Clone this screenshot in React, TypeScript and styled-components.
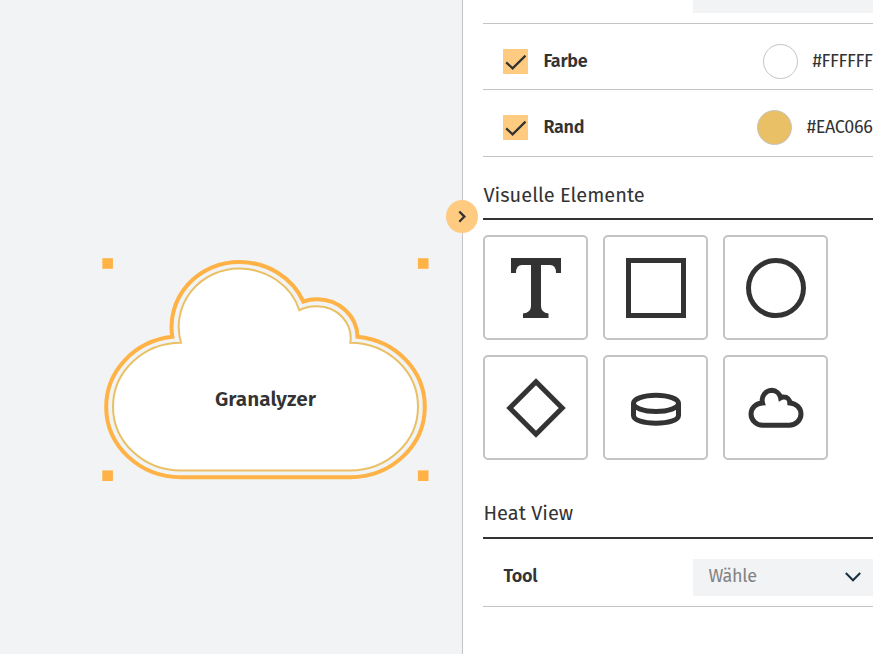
import React from "react";
import styled, { createGlobalStyle } from "styled-components";

const GlobalStyle = createGlobalStyle`
  * { box-sizing: border-box; }
  body { margin: 0; overflow: hidden; }
`;

const ink = "#333333";
const line = "#c4c4c4";

const Page = styled.div`
  display: flex;
  width: 873px;
  height: 654px;
  overflow: hidden;
  position: relative;
  background: #fff;
  color: ${ink};
  font-family: "Fira Sans", "Noto Sans", sans-serif;
`;

const Canvas = styled.main`
  flex: 0 0 462px;
  background: #f1f3f5;
  svg { display: block; }
`;

const Panel = styled.aside`
  flex: 1 0 411px;
  border-left: 1px solid ${line};
  padding-left: 20px;
  overflow: hidden;
`;

const Toggle = styled.button`
  position: absolute;
  left: 446px;
  top: 200px;
  width: 32px;
  height: 33px;
  padding: 0;
  border: 0;
  border-radius: 50%;
  background: #ffcb80;
  svg { display: block; }
`;

const Row = styled.div<{ $height: number }>`
  display: flex;
  align-items: flex-start;
  height: ${(p) => p.$height}px;
  padding-left: 20px;
  border-bottom: 1px solid ${line};
`;

const Label = styled.span<{ $top: number; $space?: number }>`
  font-size: 18px;
  line-height: 24px;
  font-weight: 600;
  letter-spacing: -0.25px;
  white-space: nowrap;
  margin-top: ${(p) => p.$top}px;
  margin-left: ${(p) => p.$space ?? 0.4}px;
`;

const Check = styled.span<{ $top: number }>`
  flex: 0 0 25px;
  height: 25px;
  margin-top: ${(p) => p.$top}px;
  background: #ffcb80;
  svg { display: block; }
`;

const ColorValue = styled.div<{ $left: number }>`
  display: flex;
  align-items: flex-start;
  margin-left: auto;
  width: ${(p) => 873 - p.$left}px;
  flex: none;
`;

const Swatch = styled.span<{ $color: string; $top: number }>`
  flex: 0 0 35px;
  height: 35px;
  margin-top: ${(p) => p.$top}px;
  border: 1px solid ${line};
  border-radius: 50%;
  background: ${(p) => p.$color};
`;

const Hex = styled(Label)`
  font-weight: 400;
  letter-spacing: -0.35px;
`;

const Select = styled.div<{ $top: number; $height: number }>`
  display: flex;
  align-items: flex-start;
  width: 180px;
  flex: none;
  height: ${(p) => p.$height}px;
  margin-top: ${(p) => p.$top}px;
  margin-left: auto;
  padding-left: 15px;
  background: #f1f3f5;
  svg { flex: none; margin: 12px 11px 0 auto; }
`;

const Placeholder = styled(Label)`
  color: #828282;
  font-weight: 400;
`;

const Heading = styled.h2<{ $height: number; $pad: number }>`
  margin: 0;
  height: ${(p) => p.$height}px;
  padding-top: ${(p) => p.$pad}px;
  padding-left: 0.5px;
  border-bottom: 2px solid ${ink};
  font-size: 20px;
  line-height: 28px;
  font-weight: 400;
  white-space: nowrap;
`;

const Shapes = styled.div`
  display: grid;
  grid-template-columns: repeat(3, 105px);
  grid-auto-rows: 105px;
  gap: 15px;
  padding-top: 15px;
`;

const ShapeCard = styled.button`
  padding: 0;
  border: 2px solid ${line};
  border-radius: 5px;
  background: #fff;
  svg { display: block; }
`;

const CheckBox = ({ top }: { top: number }) => (
  <Check $top={top}>
    <svg width="25" height="25" viewBox="0 0 25 25">
      <path d="M3.2 13.4L9.6 19.4L22.5 6.6" fill="none" stroke={ink} strokeWidth="2.2" />
    </svg>
  </Check>
);

const ShapeIcon = ({ children }: { children: React.ReactNode }) => (
  <ShapeCard>
    <svg width="101" height="101" viewBox="2 2 101 101" fill="none" stroke={ink} strokeWidth="5">
      {children}
    </svg>
  </ShapeCard>
);

export default function App() {
  return (
    <>
      <GlobalStyle />
      <Page>
        <Canvas>
          <svg width="462" height="654" viewBox="0 0 462 654">
            <path
              d="M181 477.2H350A74.8 70.2 0 0 0 424.8 407A74.8 70.4 0 0 0 357.5 336.7A40.5 38 0 0 0 317 299.3A42 42 0 0 0 303.2 301.5A69 63.5 0 0 0 239 262A67.5 65 0 0 0 172.3 336.8A74.8 70.4 0 0 0 106.2 407A74.8 70.2 0 0 0 181 477.2Z"
              fill="none" stroke="#ffb245" strokeWidth="4"
            />
            <path
              d="M181 470.5H350A68 63.8 0 0 0 418 406.7A68 64 0 0 0 350.3 342.7A33.5 31.8 0 0 0 317 306.3A36 36 0 0 0 299.3 310.2A63 57 0 0 0 239 268.5A60.5 58.3 0 0 0 181 342.7A68 64 0 0 0 113 406.7A68 63.8 0 0 0 181 470.5Z"
              fill="#fff" stroke="#eac066" strokeWidth="2"
            />
            <g fill="#ffb245">
              <rect x="102.3" y="258.2" width="10.6" height="10.6" />
              <rect x="417.9" y="258.2" width="10.6" height="10.6" />
              <rect x="102.3" y="470.4" width="10.6" height="10.6" />
              <rect x="417.9" y="470.4" width="10.6" height="10.6" />
            </g>
            <text x="215" y="406" fontSize="20" fontWeight="600" fill={ink} textLength="101" lengthAdjust="spacingAndGlyphs">
              Granalyzer
            </text>
          </svg>
        </Canvas>
        <Panel>
          <Row $height={24}>
            <Select $top={0} $height={13} />
          </Row>
          <Row $height={66}>
            <CheckBox top={25} />
            <Label $top={25} $space={15.4}>Farbe</Label>
            <ColorValue $left={763}>
              <Swatch $color="#ffffff" $top={20} />
              <Hex $top={25} $space={14.6}>#FFFFFF</Hex>
            </ColorValue>
          </Row>
          <Row $height={67}>
            <CheckBox top={25} />
            <Label $top={25} $space={15.4}>Rand</Label>
            <ColorValue $left={757}>
              <Swatch $color="#eac066" $top={20} />
              <Hex $top={25} $space={14.8}>#EAC066</Hex>
            </ColorValue>
          </Row>
          <Heading $height={63} $pad={24}>Visuelle Elemente</Heading>
          <Shapes>
            <ShapeIcon>
              <path
                d="M28 23H78V38H73Q73 30 67 30H58V71Q58 77.5 65.5 78.5V83H40V78.5Q48 77.5 48 71V30H39Q33 30 33 38H28Z"
                fill={ink} stroke="none"
              />
            </ShapeIcon>
            <ShapeIcon><rect x="25.5" y="25.5" width="55" height="55" /></ShapeIcon>
            <ShapeIcon><circle cx="53" cy="53" r="27.5" /></ShapeIcon>
            <ShapeIcon><path d="M53 26.8L79.2 53L53 79.2L26.8 53Z" /></ShapeIcon>
            <ShapeIcon>
              <ellipse cx="53" cy="48.3" rx="22.5" ry="8.1" />
              <path d="M30.5 48.5V60.5C30.5 65.5 41 68.2 53 68.2S75.5 65.5 75.5 60.5V48.5" />
            </ShapeIcon>
            <ShapeIcon>
              <path d="M40 70.2H66.2A11.8 11.2 0 0 0 78 59A11.8 11.2 0 0 0 66.8 47.9A5.8 6 0 0 0 61 42.1Q59 42 57.6 42.8A9.8 9.3 0 0 0 48.7 35.3A10 10 0 0 0 39.5 47.9A11.8 11.2 0 0 0 28 59A11.8 11.2 0 0 0 40 70.2Z" />
            </ShapeIcon>
          </Shapes>
          <Heading $height={79} $pad={39}>Heat View</Heading>
          <Row $height={68}>
            <Label $top={25}>Tool</Label>
            <Select $top={20} $height={37}>
              <Placeholder $top={5}>Wähle</Placeholder>
              <svg width="18" height="12" viewBox="0 0 18 12">
                <path d="M1.8 2L9 9.3L16.2 2" fill="none" stroke="#173040" strokeWidth="2" />
              </svg>
            </Select>
          </Row>
        </Panel>
        <Toggle aria-label="Panel einklappen">
          <svg width="32" height="33" viewBox="0 0 32 33">
            <path d="M13.3 11.5L18.4 16.6L13.3 21.7" fill="none" stroke={ink} strokeWidth="2.3" />
          </svg>
        </Toggle>
      </Page>
    </>
  );
}
